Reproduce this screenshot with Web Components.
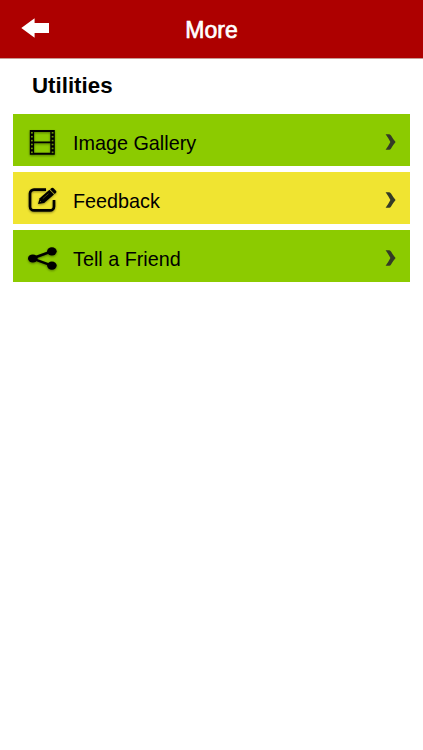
<!DOCTYPE html>
<html lang="en">
<head>
<meta charset="utf-8">
<title>More</title>
<style>
html,body{margin:0;height:100%;background:#fff;overflow:hidden}
body{font-family:"Liberation Sans",Arial,sans-serif;color:#000}
</style>
</head>
<body>
<more-screen></more-screen>
<script>
const icons = {
  film: `<path fill-rule="evenodd" d="M1.8 2.1H26.8V26.8H1.8ZM6.1 4V13.4H22.3V4ZM6.1 15.2V24.8H22.3V15.2Z"/>
    <g fill="var(--row-color)" opacity=".75">${[4,7.9,11.8,15.7,19.6,23.5].map(y => `<rect x="3" y="${y}" width="1.8" height="1.6"/><rect x="23.7" y="${y}" width="1.8" height="1.6"/>`).join('')}</g>`,
  edit: `<path d="M18 3.6H6A4 4 0 0 0 2 7.6V20.4A4 4 0 0 0 6 24.4H22A4 4 0 0 0 26 20.4V14" fill="none" stroke="#000" stroke-width="2.7"/>
    <path d="M10 18L11.7 12.3 21.4 3.8 26 8.6 16.2 17Z"/><path d="M22.1 3.2L23.6 1.9Q24.6 1.3 25.6 2.2L28.1 4.9Q29 5.9 28 6.8L26.7 8Z"/>
    <path d="M14.8 12.6L20.5 7.7" stroke="var(--row-color)" stroke-width=".3"/><circle cx="12.6" cy="15.6" r=".45" fill="var(--row-color)"/>`,
  share: `<path d="M4 14.4L24 7.3M4 14.4L24 21.6" fill="none" stroke="#000" stroke-width="2.6"/><ellipse cx="4.8" cy="14.4" rx="4.8" ry="4"/><ellipse cx="23.9" cy="7.3" rx="4.8" ry="4.1"/><ellipse cx="23.9" cy="21.6" rx="4.8" ry="4.1"/>`
};

customElements.define('app-header', class extends HTMLElement {
  constructor() {
    super();
    this.attachShadow({mode:'open'}).innerHTML = `<style>
      :host{display:grid;grid-template-columns:1fr auto 1fr;align-items:center;height:59px;background:#ad0000;border-bottom:1px solid #c89a94;box-sizing:border-box;color:#fff}
      svg{display:block;margin:0 0 2px 21px}
      h1{margin:2px 0 0;font-size:23px;line-height:28px;font-weight:400;-webkit-text-stroke:.65px #fff}
    </style><svg width="28" height="20" viewBox="0 0 28 20"><path d="M.3 10L13.6 .3V5H28V15H13.6V19.7Z" fill="#fff"/></svg><h1><slot></slot></h1><span></span>`;
  }
});

customElements.define('menu-row', class extends HTMLElement {
  connectedCallback() {
    this.attachShadow({mode:'open'}).innerHTML = `<style>
      :host{--row-color:#8ccb00;display:flex;align-items:center;height:52.4px;padding:0 13.7px 0 15px;box-sizing:border-box;background:var(--row-color)}
      :host([tone="yellow"]){--row-color:#f0e431}
      .icon{width:29px;height:30px;margin-top:6px;overflow:visible;filter:drop-shadow(0 1px 1px #0006)}
      .label{flex:1;margin:6.4px 0 0 16px;font-size:19.8px;line-height:24px}
      .arrow{width:11px;height:16px;margin-top:4px}
    </style><svg class="icon" viewBox="0 0 29 30">${icons[this.getAttribute('icon')]}</svg><span class="label"><slot></slot></span>
    <svg class="arrow" viewBox="0 0 11 16"><path d="M.6 .2H4.2Q5.3 .2 6.2 1.7Q8 5 10.6 8Q8 11 6.2 14.3Q5.3 15.8 4.2 15.8H.6Q3.2 12.3 5.4 8Q3.2 3.7 .6 .2Z" fill="#343b26"/></svg>`;
  }
});

customElements.define('more-screen', class extends HTMLElement {
  constructor() {
    super();
    this.attachShadow({mode:'open'}).innerHTML = `<style>
      :host{display:block;height:100%;background:#fff}
      h2{margin:14px 0 0 32px;font-size:22.3px;line-height:26px;font-weight:700}
      nav{display:grid;gap:5.6px;margin:14.8px 13.5px 0 13px}
    </style><app-header>More</app-header><h2>Utilities</h2>
    <nav><menu-row icon="film">Image Gallery</menu-row><menu-row icon="edit" tone="yellow">Feedback</menu-row><menu-row icon="share">Tell a Friend</menu-row></nav>`;
  }
});
</script>
</body>
</html>
